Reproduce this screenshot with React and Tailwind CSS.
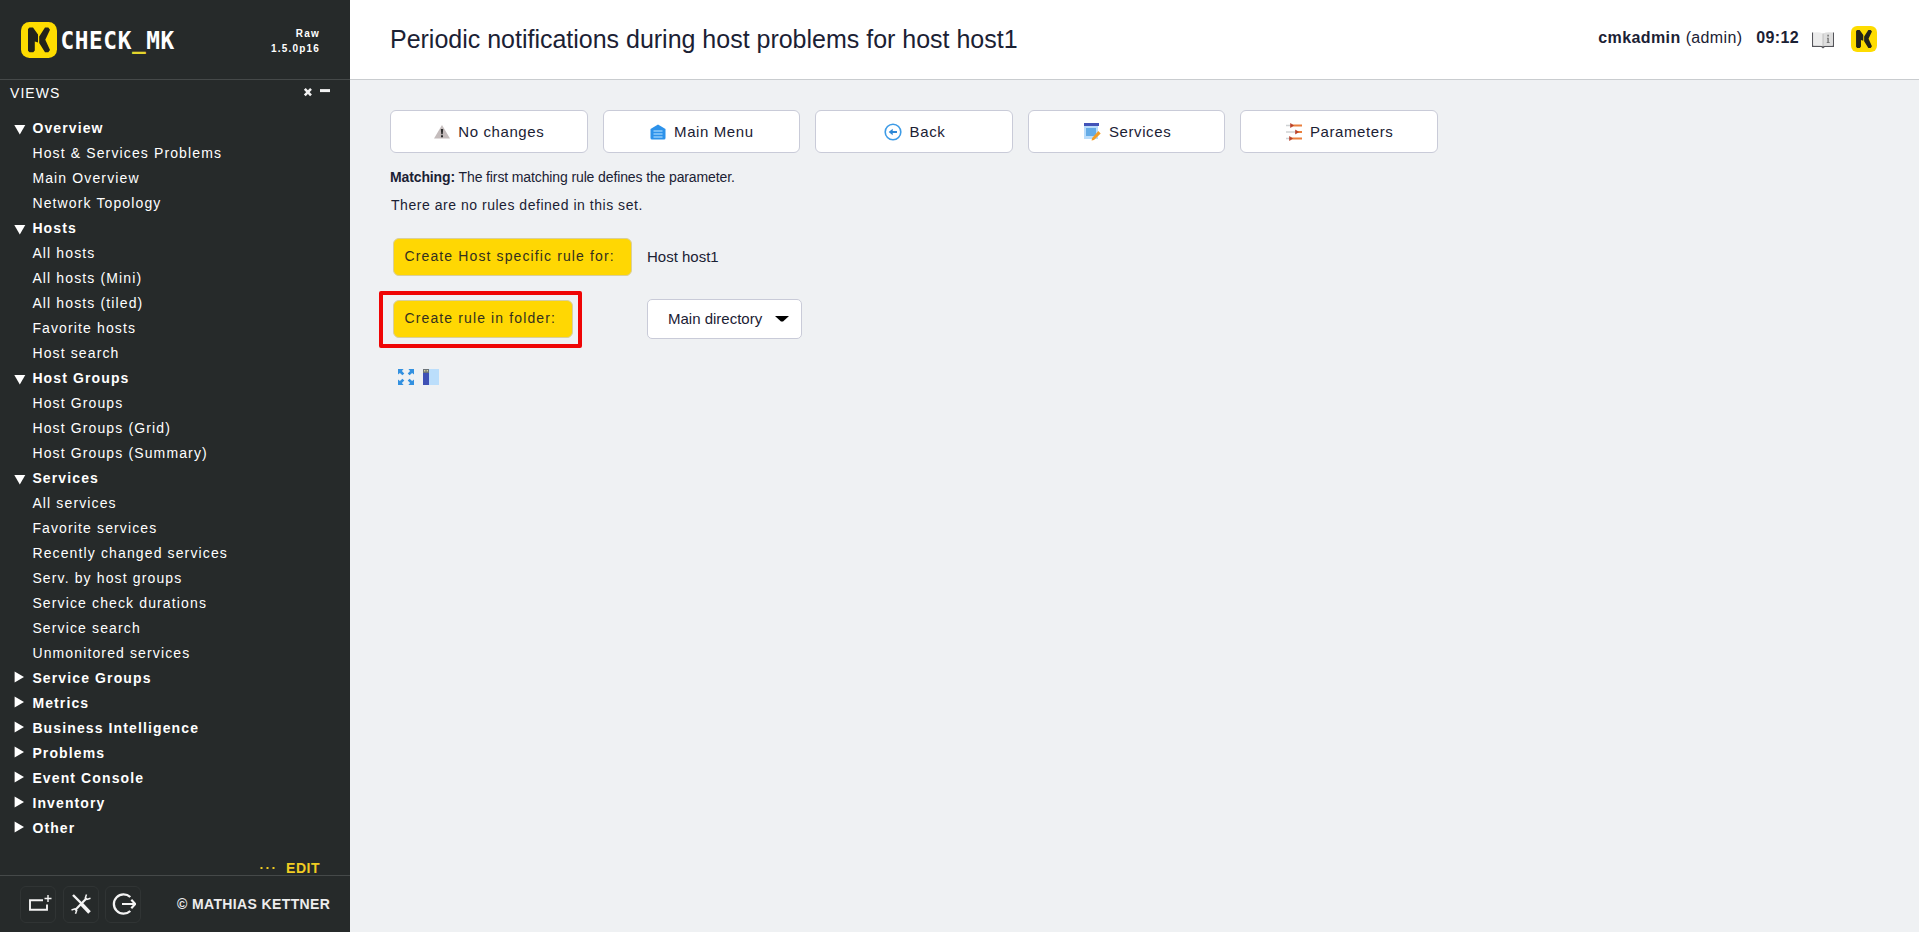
import React from "react";

const groups = [
  { title: "Overview", open: true, items: ["Host & Services Problems", "Main Overview", "Network Topology"] },
  { title: "Hosts", open: true, items: ["All hosts", "All hosts (Mini)", "All hosts (tiled)", "Favorite hosts", "Host search"] },
  { title: "Host Groups", open: true, items: ["Host Groups", "Host Groups (Grid)", "Host Groups (Summary)"] },
  {
    title: "Services",
    open: true,
    items: [
      "All services",
      "Favorite services",
      "Recently changed services",
      "Serv. by host groups",
      "Service check durations",
      "Service search",
      "Unmonitored services",
    ],
  },
  { title: "Service Groups", items: [] },
  { title: "Metrics", items: [] },
  { title: "Business Intelligence", items: [] },
  { title: "Problems", items: [] },
  { title: "Event Console", items: [] },
  { title: "Inventory", items: [] },
  { title: "Other", items: [] },
];

function Mark({ className }) {
  return (
    <svg className={className} viewBox="0 0 36 36">
      <rect width="36" height="36" rx="8.5" fill="#fedc00" />
      <path d="M8.5 5.5 H12 L17 12.5 V20.5 L13.8 19.5 V28.5 L12.3 30.3 H8.5 L7 28.8 V7 Z" fill="#23231a" />
      <path d="M24 5.5 H27.3 L29 7.7 L24.3 17.8 L29 28 L27.3 30.3 H24 L18.2 21 V14.6 Z" fill="#23231a" />
    </svg>
  );
}

function Logo() {
  return (
    <div className="flex items-center">
      <Mark className="h-9 w-9" />
      <svg className="h-9 w-[120px]" viewBox="0 0 120 36">
        <text
          transform="translate(3.4 27) scale(0.93 1)"
          fontFamily="DejaVu Sans Mono, monospace"
          fontWeight="700"
          fontSize="24.5"
          textLength="122.5"
          fill="#ffffff"
        >
          CHECK<tspan fill="#e3d52c" dy="-1">_</tspan><tspan dy="1">MK</tspan>
        </text>
      </svg>
    </div>
  );
}

function Arrow({ open }) {
  return open ? (
    <svg className="mt-px h-3 w-3 shrink-0" viewBox="0 0 12 12" fill="#fff">
      <path d="M0.3 2 H11.3 L5.8 11.5 Z" />
    </svg>
  ) : (
    <svg className="mb-[3px] h-3 w-3 shrink-0" viewBox="0 0 12 12" fill="#fff">
      <path d="M0.6 0.5 V11.5 L10 6 Z" />
    </svg>
  );
}

function FooterButton({ children, className }) {
  return (
    <div className={`flex h-[37px] w-9 items-center justify-center rounded-[6px] border border-[#303434] ${className || ""}`}>
      {children}
    </div>
  );
}

function Sidebar() {
  return (
    <aside className="flex h-full w-[350px] shrink-0 flex-col bg-[#262a2a] text-white">
      <div className="flex h-20 shrink-0 items-center justify-between border-b border-[#454949] pl-[21px] pr-[30px]">
        <Logo />
        <div className="pt-0.5 text-right text-[10px] font-bold leading-[15px] tracking-[1.2px]">
          <div>Raw</div>
          <div>1.5.0p16</div>
        </div>
      </div>
      <div className="flex h-[26px] shrink-0 items-center justify-between pl-[10px] pr-5">
        <div className="text-[14px] tracking-[1.05px]">VIEWS</div>
        <svg className="mb-0.5 h-3 w-[27px]" viewBox="0 0 27 12" stroke="#f2f2f2">
          <path d="M1.8 2.8 L8 9.4 M8 2.8 L1.8 9.4" strokeWidth="2.5" />
          <path d="M17 4.6 H27" strokeWidth="3" />
        </svg>
      </div>
      <nav className="mt-[10px] flex-1">
        {groups.map((g) => (
          <div key={g.title}>
            <div className="flex h-[25px] items-center gap-[6.4px] pl-[14px] text-[14px] font-bold tracking-[1.12px]">
              <Arrow open={g.open} />
              <span>{g.title}</span>
            </div>
            {g.items.map((i) => (
              <div key={i} className="flex h-[25px] items-center pl-[32.4px] text-[14px] tracking-[1.13px]">
                {i}
              </div>
            ))}
          </div>
        ))}
      </nav>
      <div className="flex h-[14px] shrink-0 items-center justify-end gap-[11px] pr-[30px] text-[14px] font-bold leading-none text-[#f0cc22]">
        <svg className="h-0.5 w-[15px]" viewBox="0 0 15 2" fill="currentColor">
          <path d="M0.5 0 h2 v2 h-2z M6.5 0 h2 v2 h-2z M12.5 0 h2 v2 h-2z" />
        </svg>
        <span className="tracking-[0.5px]">EDIT</span>
      </div>
      <div className="flex h-[57px] shrink-0 items-center border-t border-[#454949] pl-5">
        <FooterButton>
          <svg className="ml-1 h-6 w-6" viewBox="0 0 24 24" fill="none" stroke="#f4f4f4">
            <path d="M15 8.2 H2 V17.8 H19 V12.5" strokeWidth="1.9" />
            <path d="M20 3 V10 M16.5 6.5 H23.5" strokeWidth="1.4" />
          </svg>
        </FooterButton>
        <FooterButton className="ml-[7px]">
          <svg className="h-6 w-6" viewBox="0 0 24 24" fill="none" stroke="#f4f4f4">
            <path d="M4 3 L13 12" strokeWidth="2.4" />
            <path d="M12.5 12 L20.5 20.5" strokeWidth="3.6" />
            <path d="M17.8 6 L6 18.2" strokeWidth="2.2" />
            <path d="M17.5 2.5 L16.3 6 L18 7.5 L21.5 6.3" strokeWidth="1.5" />
            <path d="M2.5 18 L6 16.8 L7.7 18.4 L6.5 21.8" strokeWidth="1.5" />
          </svg>
        </FooterButton>
        <FooterButton className="ml-1.5">
          <svg className="ml-0.5 h-6 w-6" viewBox="0 0 24 24" fill="none" stroke="#f4f4f4">
            <path d="M18.3 5 A9.7 9.7 0 1 0 18.3 19" strokeWidth="2.3" />
            <path d="M10 12 H23 M19.3 7.8 L23.3 12 L19.3 16.2" strokeWidth="2.2" />
          </svg>
        </FooterButton>
        <div className="ml-[36px] whitespace-nowrap text-[14px] font-bold tracking-[0.37px] text-[#ededed]">© MATHIAS KETTNER</div>
      </div>
    </aside>
  );
}

const icons = {
  warn: (
    <svg className="h-4 w-4" viewBox="0 0 16 16">
      <path d="M8 1 L16 14.5 H0 Z" fill="#c4bcbc" />
      <path d="M6.8 5 H9.2 L8.7 10.3 H7.3 Z M7 11.3 H9 V13.2 H7 Z" fill="#2c2c2c" />
    </svg>
  ),
  home: (
    <svg className="h-4 w-4" viewBox="0 0 16 16">
      <path d="M8 0.5 L15.5 5 V14 Q15.5 15.5 14 15.5 H2 Q0.5 15.5 0.5 14 V5 Z" fill="#2d92ea" />
      <path d="M3.5 7 H12.5 M3.5 10 H12.5 M3.5 13 H12.5" stroke="#8fccfb" strokeWidth="1.4" />
    </svg>
  ),
  back: (
    <svg className="h-[18px] w-[18px]" viewBox="0 0 18 18">
      <circle cx="9" cy="9" r="7.8" fill="none" stroke="#3d9be6" strokeWidth="1.6" />
      <path d="M13 7.9 V10.1 H8.7 V12.2 L4.7 9 L8.7 5.8 V7.9 Z" fill="#2e88d6" />
    </svg>
  ),
  services: (
    <svg className="h-[18px] w-[18px]" viewBox="0 0 18 18">
      <rect x="1" y="1" width="14" height="15" fill="#b9dcfb" />
      <rect x="1" y="0" width="15" height="3" fill="#4253b8" />
      <rect x="3" y="5" width="10" height="8" fill="#64abe6" />
      <path d="M15.3 8 L17.7 10.4 L11 17 L8.6 17.6 L9.2 15 Z" fill="#f49d25" />
    </svg>
  ),
  params: (
    <svg className="h-[18px] w-4" viewBox="0 0 16 18">
      <path d="M0 2.5 H5 M0 9 H10 M0 15.5 H4" stroke="#cfd2d4" strokeWidth="1.6" />
      <path d="M5 2.5 H16 M11 9 H16 M4 15.5 H16" stroke="#ea7f3c" strokeWidth="2" />
      <path d="M4.5 0.5 V4.5 L7.5 2.5 Z M9.5 7 V11 L12.5 9 Z M3.5 13.5 V17.5 L6.5 15.5 Z" fill="#b8402a" stroke="#b8402a" strokeWidth="0.6" />
    </svg>
  ),
};

const buttons = [
  ["warn", "No changes"],
  ["home", "Main Menu"],
  ["back", "Back"],
  ["services", "Services"],
  ["params", "Parameters"],
];

function Header() {
  return (
    <header className="flex h-20 shrink-0 items-center justify-between border-b border-[#c9cccf] bg-white pl-10 pr-[42px]">
      <h1 className="text-[25px] tracking-[-0.01px]">Periodic notifications during host problems for host host1</h1>
      <div className="flex items-center text-[16px]">
        <div className="flex pb-[3px]">
          <span className="font-bold tracking-[0.4px]">cmkadmin</span>
          <span className="ml-[5px] tracking-[0.35px]">(admin)</span>
          <span className="ml-[14px] font-bold tracking-[0.35px]">09:12</span>
        </div>
        <svg className="ml-[13px] h-[18px] w-[22px]" viewBox="0 0 22 18">
          <path d="M0 1.5 H1.2 V14.8 H20.8 V1.5 H22 V16 H12.8 L11 17.6 L9.2 16 H0 Z" fill="#55555a" />
          <path d="M1.5 1.5 Q7 0.5 11 2.5 V15.3 Q7 13.6 1.5 14.3 Z" fill="#ececec" />
          <path d="M20.5 1.5 Q15 0.5 11 2.5 V15.3 Q15 13.6 20.5 14.3 Z" fill="#dedede" />
          <path d="M11 2.5 V15.5" stroke="#b5b5b5" strokeWidth="0.8" />
          <path d="M15.3 3.8 H16.9 V5.4 H15.3 Z M15 6.7 H16.8 V11 H17.6 V12 H14.8 V11 H15.4 V7.7 H15 Z" fill="#777" />
        </svg>
        <Mark className="mb-0.5 ml-[17px] h-[26px] w-[26px]" />
      </div>
    </header>
  );
}

function YellowButton({ children, className }) {
  return (
    <div className={`flex h-[38px] items-center rounded-[6px] border border-[#d9cf9c] bg-[#ffd703] pl-[10.5px] text-[14px] tracking-[1.12px] text-[#33301f] ${className}`}>
      <span className="whitespace-nowrap pb-px">{children}</span>
    </div>
  );
}

export default function App() {
  return (
    <div className="flex h-[932px] w-full overflow-hidden bg-[#eff1f3] font-['Liberation_Sans',Arial,sans-serif] text-[#1b2134]">
      <Sidebar />
      <div className="flex min-w-0 flex-1 flex-col">
        <Header />
        <main className="px-10 pt-[30px]">
          <div className="grid w-[1048px] grid-cols-5 gap-[15px]">
            {buttons.map(([icon, label]) => (
              <div key={label} className="flex h-[43px] items-center justify-center gap-[8px] rounded-[6px] border border-[#c9cbd8] bg-white pl-px text-[15px] tracking-[0.6px]">
                {icons[icon]}
                <span className="pt-0.5">{label}</span>
              </div>
            ))}
          </div>
          <p className="mt-[14px] text-[14px] leading-5 tracking-[-0.12px]">
            <b>Matching:</b> The first matching rule defines the parameter.
          </p>
          <p className="ml-px mt-2 text-[14px] leading-5 tracking-[0.53px]">There are no rules defined in this set.</p>
          <div className="mt-[23px] flex items-center">
            <div className="w-[257px] pl-[3px]">
              <YellowButton className="w-[239px]">Create Host specific rule for:</YellowButton>
            </div>
            <span className="text-[15px]">Host host1</span>
          </div>
          <div className="-ml-[11px] mt-[15px] flex items-center">
            <div className="flex h-[57px] w-[203px] items-center rounded-[2px] border-4 border-[#ef0505] pb-px pl-[10px]">
              <YellowButton className="w-[180px]">Create rule in folder:</YellowButton>
            </div>
            <div className="mb-px ml-[65px] flex h-10 w-[155px] items-center justify-between rounded-[5px] border border-[#c9cbd8] bg-white pl-5 pr-[12px] text-[15px]">
              <span className="whitespace-nowrap">Main directory</span>
              <svg className="h-[6px] w-[14px]" viewBox="0 0 14 6">
                <path d="M0 0 H14 L8 5.4 H6 Z" fill="#000" />
              </svg>
            </div>
          </div>
          <div className="ml-2 mt-[21px] flex gap-[9px]">
            <svg className="h-4 w-4" viewBox="0 0 16 16" fill="#3391e0">
              <g id="corner">
                <path d="M0 0 H5.6 L3.9 1.9 L6.3 4.4 L4.4 6.3 L1.9 3.9 L0 5.6 Z" />
              </g>
              <use href="#corner" transform="rotate(90 8 8)" />
              <use href="#corner" transform="rotate(180 8 8)" />
              <use href="#corner" transform="rotate(270 8 8)" />
            </svg>
            <svg className="h-4 w-4" viewBox="0 0 16 16">
              <rect width="16" height="16" fill="#bbdefb" />
              <rect width="6" height="16" fill="#3f51b5" />
              <rect width="6" height="4" fill="#6d7478" />
              <path d="M1 1 H2.4 V2.6 H1 Z M3.6 1 H5 V2.6 H3.6 Z" fill="#d8d49a" />
            </svg>
          </div>
        </main>
      </div>
    </div>
  );
}
